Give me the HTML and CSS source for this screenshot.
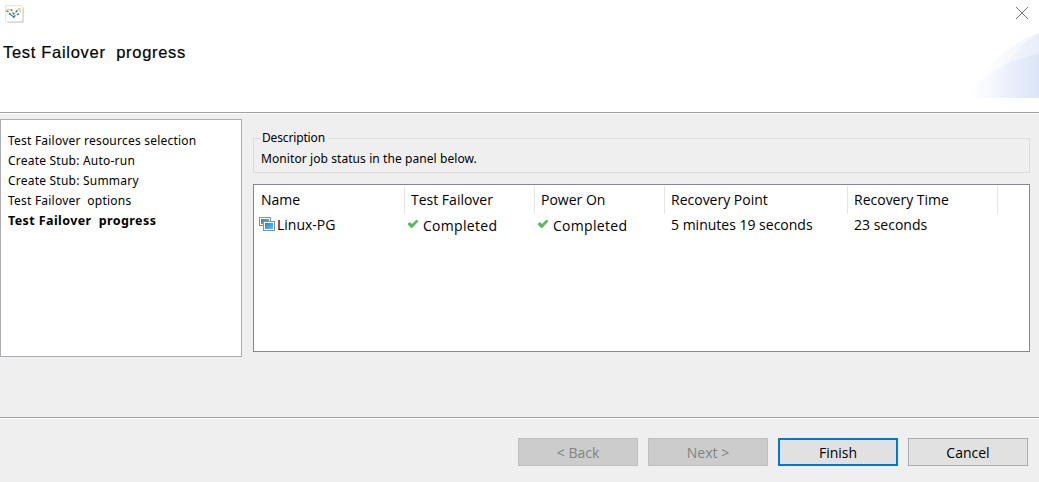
FILE: index.html
```html
<!DOCTYPE html>
<html lang="en">
<head>
<meta charset="utf-8">
<title>Test Failover progress</title>
<link rel="stylesheet" href="styles.css">
</head>
<body>
<div class="dialog">
  <header class="header">
    <div class="titlebar">
      <svg class="app-icon" width="20" height="20" viewBox="0 0 20 20">
        <rect x="1.5" y="1.5" width="17" height="16" rx="1.500" fill="#b4b4b4"/>
        <rect x=".5" y=".5" width="17" height="16" rx="1.500" fill="#fcfcfc" stroke="#e6e6e6"/>
        <path d="M1 7Q1 4 4 4.500T8 7.500T12 6T15 4.500T16 7.500" fill="none" stroke="#d9c88c" stroke-width="1.200"/>
        <path d="M2 6l1.500 1M6 4.500l1 1M4 8.500l2 1M8 8l1 1.500M12 5.500l-1 1.500M14 8.500l-2 1.500M10.500 10.500l-1.500 1M8 11l1 2M6 10l1.500 1" fill="none" stroke="#2f79aa" stroke-width="1.500"/>
      </svg>
      <svg class="close" width="12" height="12" viewBox="0 0 12 12"><path d="M0 0L12 12M12 0L0 12" stroke="#777" stroke-width="1"/></svg>
    </div>
    <h1 class="title">Test Failover&nbsp; progress</h1>
    <svg class="swoosh" width="70" height="66" viewBox="0 0 70 66">
      <defs>
        <linearGradient id="a"><stop offset="0" stop-color="#c8d5f4" stop-opacity="0"/><stop offset="1" stop-color="#c8d5f4" stop-opacity=".24"/></linearGradient>
        <linearGradient id="b"><stop offset="0" stop-color="#b6c8f0" stop-opacity="0"/><stop offset="1" stop-color="#b6c8f0" stop-opacity=".26"/></linearGradient>
      </defs>
      <path d="M0 66Q26 16 70 1V66Z" fill="url(#a)"/>
      <path d="M0 66Q25 29 70 22V66Z" fill="url(#b)"/>
      <path d="M23 66Q35 21 70 1V66Z" fill="url(#a)"/>
    </svg>
  </header>
  <main class="body">
    <ul class="steps">
      <li>Test Failover resources selection</li>
      <li>Create Stub: Auto-run</li>
      <li>Create Stub: Summary</li>
      <li>Test Failover&nbsp; options</li>
      <li class="current">Test Failover&nbsp; progress</li>
    </ul>
    <section class="content">
      <fieldset class="description">
        <legend>Description</legend>
        <p>Monitor job status in the panel below.</p>
      </fieldset>
      <div class="table">
        <div class="row head">
          <span>Name</span><span>Test Failover</span><span>Power On</span><span>Recovery Point</span><span>Recovery Time</span>
        </div>
        <div class="row">
          <span class="vm"><svg width="16" height="14" viewBox="0 0 16 14">
            <defs><linearGradient id="m" x2="1" y2="1"><stop stop-color="#1583dc"/><stop offset="1" stop-color="#63c4fa"/></linearGradient></defs>
            <rect x=".5" y=".5" width="11" height="8" fill="#fff" stroke="#7895b0"/><rect x="2" y="2" width="8" height="5" fill="url(#m)"/>
            <rect x="4.500" y="4.500" width="11" height="9" fill="#fff" stroke="#7895b0"/><rect x="6" y="6" width="8" height="6" fill="url(#m)"/>
          </svg>Linux-PG</span>
          <span class="state"><svg width="12" height="10" viewBox="0 0 12 10"><path d="M1 5L3 3.500L5 5.500L9.500 1L11 2.300L5.200 8.500H4Z" fill="#58bd59" stroke="#43a447" stroke-width=".7"/></svg>Completed</span>
          <span class="state"><svg width="12" height="10" viewBox="0 0 12 10"><path d="M1 5L3 3.500L5 5.500L9.500 1L11 2.300L5.200 8.500H4Z" fill="#58bd59" stroke="#43a447" stroke-width=".7"/></svg>Completed</span>
          <span>5 minutes 19 seconds</span><span>23 seconds</span>
        </div>
      </div>
    </section>
  </main>
  <footer class="footer">
    <button disabled>&lt; Back</button>
    <button disabled>Next &gt;</button>
    <button class="primary">Finish</button>
    <button>Cancel</button>
  </footer>
</div>
</body>
</html>
```
FILE: styles.css
```css
* { box-sizing: border-box; }
body { margin: 0; }
.dialog {
  display: flex;
  flex-direction: column;
  width: 1039px;
  height: 482px;
  background: #efefef;
  color: #000;
  font: 14px/20px "Open Sans", "Noto Sans", sans-serif;
}
.header {
  position: relative;
  height: 113px;
  background: #fff;
  border-bottom: 1px solid #a0a0a0;
}
.titlebar {
  display: flex;
  justify-content: space-between;
  padding: 5px 11px 0 5px;
  height: 42px;
}
.close { margin-top: 2px; }
.title {
  margin: 0;
  padding-left: 3px;
  font: 16.500px/20px "Liberation Sans", sans-serif;
  letter-spacing: .7px;
  -webkit-text-stroke: .2px #000;
}
.swoosh { position: absolute; right: 0; bottom: 14px; }
.body {
  display: flex;
  gap: 11px;
  height: 304px;
  padding: 5px 9px 0 0;
  border-top: 1px solid #fff;
}
.steps {
  width: 242px;
  height: 238px;
  margin: 0;
  padding: 11px 0 0 7px;
  list-style: none;
  background: #fff;
  border: 1px solid #abadb3;
  font-family: "Noto Sans", sans-serif;
  font-size: 12px;
  letter-spacing: .22px;
  white-space: nowrap;
}
.current {
  font-size: 12.500px;
  font-weight: 700;
  letter-spacing: .4px;
}
.content { flex: 1; padding-top: 10px; }
.description {
  height: 44px;
  margin: 0;
  padding: 0 7px;
  border: 1px solid #dcdcdc;
  font-family: "Noto Sans", sans-serif;
  font-size: 12px;
}
.description legend {
  margin-left: -1px;
  padding: 0 3px 0 2px;
  line-height: 18px;
  letter-spacing: -.15px;
}
.description p { margin: 2px 0 0; letter-spacing: .08px; }
.table {
  height: 168px;
  margin-top: 11px;
  border: 1px solid #828790;
  background: #fff;
}
.row {
  display: grid;
  grid-template-columns: 151px 130px 130px 183px 150px;
  height: 25px;
  line-height: 26px;
}
.row > span { padding-left: 6px; white-space: nowrap; }
.row > span:first-child { padding-left: 7px; }
.head { height: 27px; padding-top: 1px; line-height: 28px; }
.head > span { border-right: 1px solid #e5e5e5; }
.row > .vm, .row > .state { display: flex; }
.row > .vm:first-child { gap: 2px; padding-left: 5px; }
.vm svg { margin-top: 5px; }
.row > .state { gap: 4px; padding-left: 2px; line-height: 28px; letter-spacing: .3px; }
.state svg { margin-top: 7px; }
.footer {
  display: flex;
  justify-content: flex-end;
  gap: 10px;
  height: 65px;
  padding: 20px 11px 0 0;
  border-top: 1px solid #a0a0a0;
  box-shadow: inset 0 1px #fff;
}
button {
  width: 120px;
  height: 28px;
  padding: 2px 0 0;
  border: 1px solid #adadad;
  background: #e1e1e1;
  color: #000;
  font: 14px/24px "Open Sans", "Noto Sans", sans-serif;
}
button:disabled { background: #ccc; border-color: #bfbfbf; color: #838383; }
.primary { padding: 1px 0 0; border: 2px solid #0078d7; }
```
